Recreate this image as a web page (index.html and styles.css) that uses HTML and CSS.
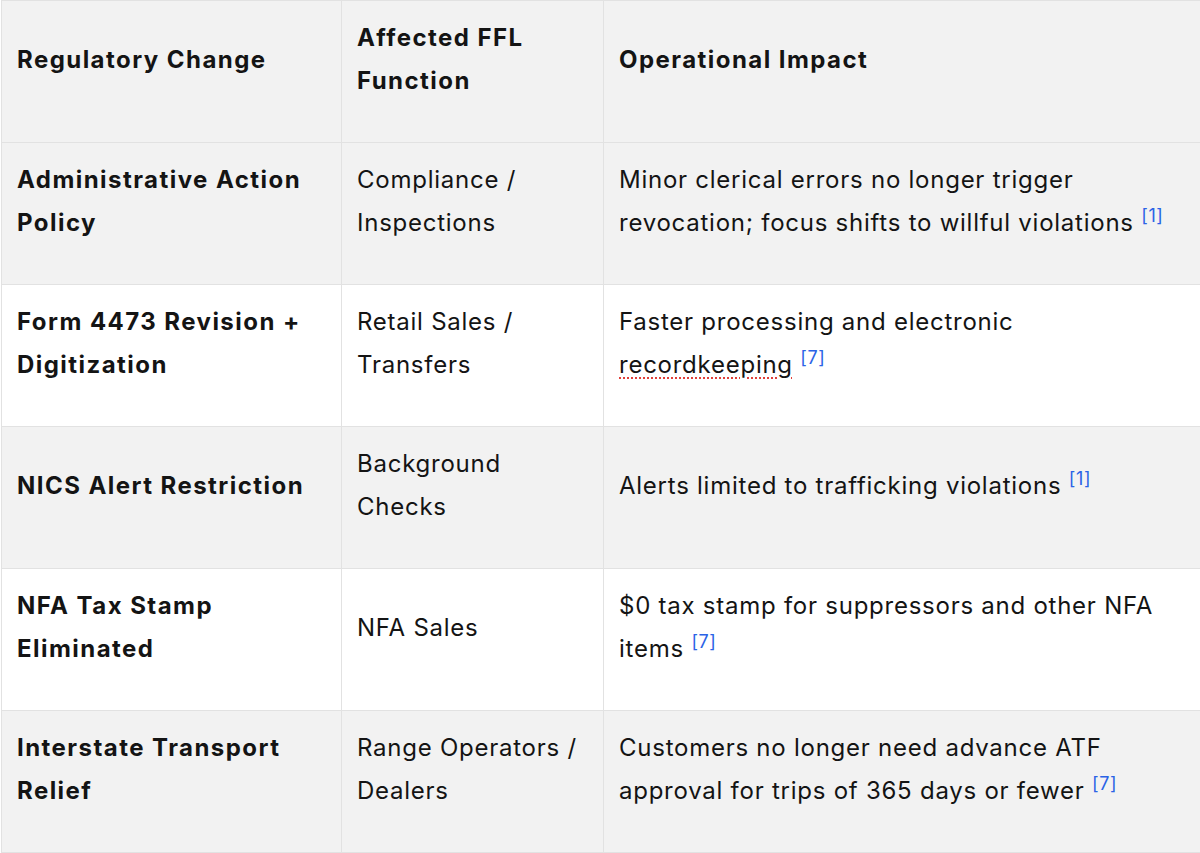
FILE: index.html
```html
<!DOCTYPE html>
<html lang="en">
<head>
<meta charset="utf-8">
<title>Regulatory Changes</title>
<link rel="stylesheet" href="styles.css">
</head>
<body>
<table class="reg-table">
  <colgroup>
    <col class="c1">
    <col class="c2">
    <col class="c3">
  </colgroup>
  <thead>
    <tr>
      <th>Regulatory Change</th>
      <th>Affected FFL Function</th>
      <th>Operational Impact</th>
    </tr>
  </thead>
  <tbody>
    <tr>
      <td class="name">Administrative Action Policy</td>
      <td>Compliance / Inspections</td>
      <td>Minor clerical errors no longer trigger revocation; focus shifts to willful violations <sup class="ref">[1]</sup></td>
    </tr>
    <tr>
      <td class="name">Form 4473 Revision + Digitization</td>
      <td>Retail Sales / Transfers</td>
      <td>Faster processing and electronic <span class="spell">recordkeeping</span> <sup class="ref">[7]</sup></td>
    </tr>
    <tr>
      <td class="name">NICS Alert Restriction</td>
      <td>Background Checks</td>
      <td>Alerts limited to trafficking violations <sup class="ref">[1]</sup></td>
    </tr>
    <tr>
      <td class="name">NFA Tax Stamp Eliminated</td>
      <td>NFA Sales</td>
      <td>$0 tax stamp for suppressors and other NFA items <sup class="ref">[7]</sup></td>
    </tr>
    <tr>
      <td class="name">Interstate Transport Relief</td>
      <td>Range Operators / Dealers</td>
      <td>Customers no longer need advance ATF approval for trips of 365 days or fewer <sup class="ref">[7]</sup></td>
    </tr>
  </tbody>
</table>
</body>
</html>
```

FILE: styles.css
```css
html, body {
  margin: 0;
  padding: 0;
  background: #ffffff;
}
body {
  font-family: Inter, "Noto Sans", "Liberation Sans", sans-serif;
  color: #141414;
  overflow: hidden;
}
.reg-table {
  border-collapse: collapse;
  table-layout: fixed;
  width: 1200px;
  margin-left: 1px;
  font-size: 24px;
  line-height: 43px;
}
.c1 { width: 340px; }
.c2 { width: 262px; }
.c3 { width: 598px; }
.reg-table th,
.reg-table td {
  border: 1px solid #e2e2e2;
  padding: 15px 15px 40px 15px;
  height: 86px;
  vertical-align: middle;
  text-align: left;
  letter-spacing: 0.75px;
}
.reg-table th {
  font-weight: 700;
  background: #f2f2f2;
  letter-spacing: 1.45px;
}
.reg-table td {
  font-weight: 400;
}
.reg-table td.name {
  font-weight: 700;
  letter-spacing: 1.45px;
}
.reg-table tbody tr:nth-child(odd) td {
  background: #f2f2f2;
}
.reg-table tbody tr:nth-child(even) td {
  background: #ffffff;
}
.ref {
  color: #2b63e6;
  font-size: 18px;
  line-height: 0;
  vertical-align: 9px;
  letter-spacing: 0.6px;
}
.spell {
  text-decoration: underline dotted #e0403a;
  text-decoration-thickness: 2px;
  text-underline-offset: 4px;
}
```
